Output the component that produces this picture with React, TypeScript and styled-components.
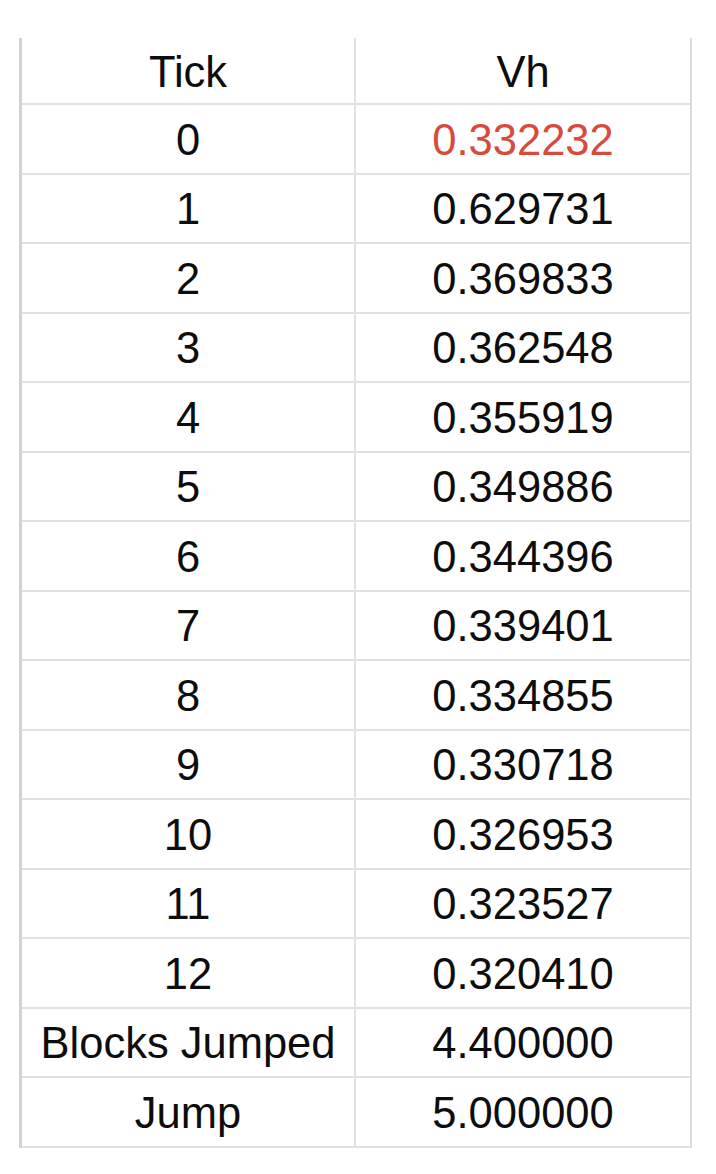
import { Fragment } from "react";
import styled, { createGlobalStyle } from "styled-components";

const GlobalStyle = createGlobalStyle`
  html, body {
    margin: 0;
    padding: 0;
    background: #ffffff;
  }
`;

const Page = styled.div`
  width: 716px;
  height: 1174px;
  padding: 38px 0 0 19px;
  box-sizing: border-box;
  background: #ffffff;
`;

const Sheet = styled.div`
  width: 673px;
  display: grid;
  grid-template-columns: 334px 1fr;
  border-left: 3px solid #d2d2d2;
  border-right: 2px solid #dcdcdc;
  box-sizing: border-box;
  font-family: "Liberation Sans", Arial, sans-serif;
  font-size: 43.5px;
  color: #0d0d0d;
`;

const Cell = styled.div<{ $header?: boolean; $last?: boolean; $alert?: boolean }>`
  height: ${(p) => (p.$header ? "67px" : "69.5px")};
  display: flex;
  align-items: center;
  justify-content: center;
  box-sizing: border-box;
  padding-top: 3px;
  border-bottom: 2px solid #e1e1e1;
  border-right: ${(p) => (p.$last ? "none" : "2px solid #e1e1e1")};
  color: ${(p) => (p.$alert ? "#d84a3c" : "#0d0d0d")};
  white-space: nowrap;
`;

const rows: [string, string][] = [
  ["0", "0.332232"],
  ["1", "0.629731"],
  ["2", "0.369833"],
  ["3", "0.362548"],
  ["4", "0.355919"],
  ["5", "0.349886"],
  ["6", "0.344396"],
  ["7", "0.339401"],
  ["8", "0.334855"],
  ["9", "0.330718"],
  ["10", "0.326953"],
  ["11", "0.323527"],
  ["12", "0.320410"],
  ["Blocks Jumped", "4.400000"],
  ["Jump", "5.000000"],
];

const App = () => {
  return (
    <Page>
      <GlobalStyle />
      <Sheet>
        <Cell $header>Tick</Cell>
        <Cell $header $last>
          Vh
        </Cell>
        {rows.map(([tick, vh], i) => (
          <Fragment key={tick}>
            <Cell>{tick}</Cell>
            <Cell $last $alert={i === 0}>
              {vh}
            </Cell>
          </Fragment>
        ))}
      </Sheet>
    </Page>
  );
};

export default App;
